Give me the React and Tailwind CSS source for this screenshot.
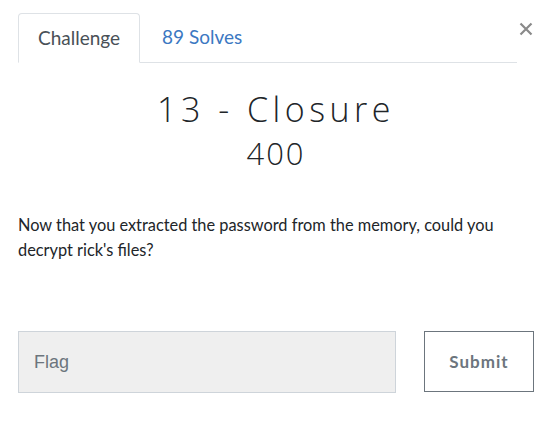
export default function App() {
  return (
    <div className="relative w-[558px] h-[424px] bg-white overflow-hidden" style={{ fontFamily: "Lato, 'Liberation Sans', sans-serif" }}>
      <div className="flex pl-[18px] pr-[41px]">
        <div className="flex-1 mt-[13px] flex border-b border-[#dee2e6]">
          <div className="w-[122px] h-[50px] -mb-px border border-[#dee2e6] border-b-white rounded-t-[4px] bg-white flex items-center justify-center text-[19px] text-[#495057]">
            Challenge
          </div>
          <div className="pl-[22px] h-[49px] flex items-center text-[19px] text-[#3b78c2]">89 Solves</div>
        </div>
        <button className="absolute right-[25px] top-[22px] text-[#8a8a8a]" aria-label="Close">
          <svg width="14" height="14" viewBox="0 0 14 14" fill="none" stroke="currentColor" strokeWidth="2.2">
            <path d="M1.5 1.5 L12.5 12.5 M12.5 1.5 L1.5 12.5" />
          </svg>
        </button>
      </div>
      <div className="px-[18px] w-[552px]">
        <div className="text-center mt-[24px] text-[34px] leading-[44px] text-[#212529] tracking-[4.5px]" style={{ fontFamily: "'Open Sans', sans-serif", fontWeight: 300 }}>
          13 - Closure
        </div>
        <div className="text-center mt-[2px] text-[31px] leading-[40px] text-[#212529] tracking-[2px]" style={{ fontFamily: "'Open Sans', sans-serif", fontWeight: 350 }}>
          400
        </div>
        <p className="mt-[39px] text-[16.35px] leading-[25px] text-[#212529]">
          Now that you extracted the password from the memory, could you decrypt rick's files?
        </p>
        <div className="mt-[69px] flex gap-[28px]">
          <input
            className="flex-1 h-[62px] bg-[#efefef] border border-[#ced4da] px-[15px] text-[18px] text-[#495057] placeholder:text-[#6c757d] outline-none"
            style={{ fontFamily: "'Liberation Sans', Arial, sans-serif" }}
            placeholder="Flag"
          />
          <button className="w-[110px] h-[61px] border border-[#6c757d] bg-white text-[17px] font-bold text-[#6c757d] tracking-[1px]">
            Submit
          </button>
        </div>
      </div>
    </div>
  );
}
